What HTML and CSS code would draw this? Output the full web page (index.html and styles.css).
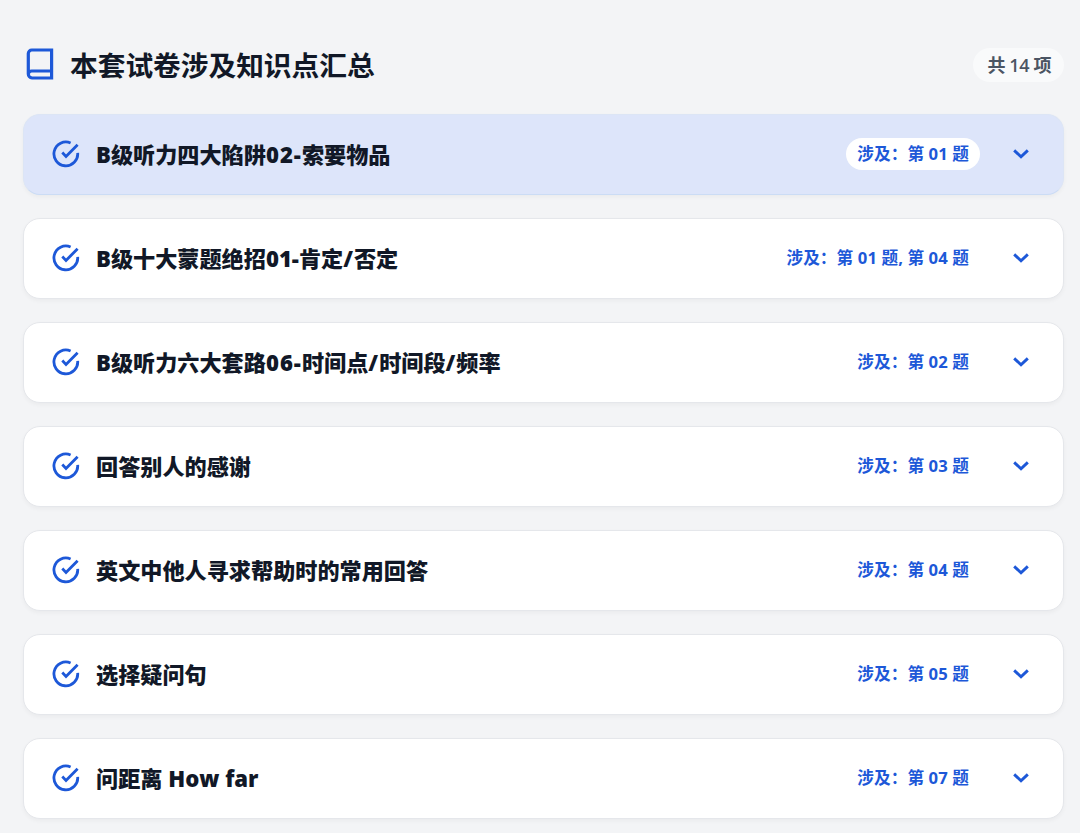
FILE: index.html
```html
<!DOCTYPE html>
<html lang="zh-CN">
<head>
    <meta charset="UTF-8">
    <meta name="viewport" content="width=device-width, initial-scale=1.0">
    <title>本套试卷涉及知识点汇总</title>
    <link rel="stylesheet" href="styles.css">
</head>
<body>
    <svg class="symbols" width="0" height="0">
        <symbol id="check" viewBox="0 0 28 28">
            <path d="M18.6 3A11.9 11.9 0 1 0 25.7 12.9"/>
            <path d="M10.3 12.6L14 16.4L25.6 4.8"/>
        </symbol>
        <symbol id="chevron" viewBox="0 0 16 10">
            <path d="M1.2 1.4L8 7.8L14.8 1.4"/>
        </symbol>
    </svg>

    <div class="container">
        <div class="header">
            <svg class="book" viewBox="0 0 28 32">
                <path d="M25.6 30H6A4 4 0 0 1 2.3 26V5.5A3.5 3.5 0 0 1 5.8 2H25.6ZM2.3 26A3.4 3.4 0 0 1 5.7 23H25.6"/>
            </svg>
            <h1>本套试卷涉及知识点汇总</h1>
            <span class="total">共 14 项</span>
        </div>

        <div class="list">
            <div class="item active">
                <svg class="check"><use href="#check"/></svg>
                <h2>B级听力四大陷阱<span class="wide">02-</span>索要物品</h2>
                <span class="tag">涉及：第 01 题</span>
                <svg class="chevron"><use href="#chevron"/></svg>
            </div>
            <div class="item">
                <svg class="check"><use href="#check"/></svg>
                <h2>B级十大蒙题绝招01-肯定<span class="wide">/</span>否定</h2>
                <span class="tag">涉及：第 01 题, 第 04 题</span>
                <svg class="chevron"><use href="#chevron"/></svg>
            </div>
            <div class="item">
                <svg class="check"><use href="#check"/></svg>
                <h2>B级听力六大套路<span class="wide">06-</span>时间点<span class="wide">/</span>时间段<span class="wide">/</span>频率</h2>
                <span class="tag">涉及：第 02 题</span>
                <svg class="chevron"><use href="#chevron"/></svg>
            </div>
            <div class="item">
                <svg class="check"><use href="#check"/></svg>
                <h2>回答别人的感谢</h2>
                <span class="tag">涉及：第 03 题</span>
                <svg class="chevron"><use href="#chevron"/></svg>
            </div>
            <div class="item">
                <svg class="check"><use href="#check"/></svg>
                <h2>英文中他人寻求帮助时的常用回答</h2>
                <span class="tag">涉及：第 04 题</span>
                <svg class="chevron"><use href="#chevron"/></svg>
            </div>
            <div class="item">
                <svg class="check"><use href="#check"/></svg>
                <h2>选择疑问句</h2>
                <span class="tag">涉及：第 05 题</span>
                <svg class="chevron"><use href="#chevron"/></svg>
            </div>
            <div class="item">
                <svg class="check"><use href="#check"/></svg>
                <h2>问距离 How far</h2>
                <span class="tag">涉及：第 07 题</span>
                <svg class="chevron"><use href="#chevron"/></svg>
            </div>
        </div>
    </div>
</body>
</html>
```
FILE: styles.css
```css
* {
    box-sizing: border-box;
}

body {
    margin: 0;
    background-color: #f3f4f6;
    color: #111827;
    font-family: "Open Sans", "Noto Sans CJK SC", sans-serif;
}

.symbols {
    display: block;
}

svg {
    flex: none;
    fill: none;
    stroke: #1d58d8;
}

.container {
    padding: 46px 16px 13px 23px;
}

.header {
    display: flex;
    align-items: center;
    height: 38px;
    margin-bottom: 30px;
    padding-left: 3px;
}

.book {
    width: 28px;
    height: 32px;
    margin: 0 16px 2px 0;
    stroke-width: 3.2;
}

h1 {
    margin: 0;
    font-size: 27.7px;
    font-weight: 700;
    line-height: 38px;
}

.total {
    margin-left: auto;
    padding: 0 13px 0 14px;
    border-radius: 17px;
    background-color: #f9fafb;
    color: #4b5563;
    font-size: 18px;
    font-weight: 600;
    letter-spacing: -0.4px;
    line-height: 34px;
}

.list {
    display: flex;
    flex-direction: column;
    gap: 23px;
}

.item {
    display: flex;
    align-items: center;
    height: 81px;
    padding: 0 34px 2px 28px;
    border: 1px solid #e5e7eb;
    border-radius: 17px;
    background-color: #fff;
    box-shadow: 0 2px 4px rgba(0, 0, 0, 0.04);
}

.item.active {
    background-color: #dde5fa;
    border-color: #dce5f5;
    border-bottom-color: #cbdcf5;
}

.check {
    width: 28px;
    height: 28px;
    margin-right: 16px;
    stroke-width: 2.8;
}

h2 {
    margin: 0;
    font-size: 22.15px;
    font-weight: 800;
    line-height: 30px;
}

.wide {
    letter-spacing: 1px;
}

.tag {
    margin-left: auto;
    padding: 0 11px;
    border-radius: 16px;
    background-color: #fff;
    color: #1d58d8;
    font-size: 16.65px;
    font-weight: 700;
    letter-spacing: 0.1px;
    line-height: 32px;
}

.chevron {
    width: 16px;
    height: 10px;
    margin-left: 33px;
    stroke-width: 2.9;
}
```
